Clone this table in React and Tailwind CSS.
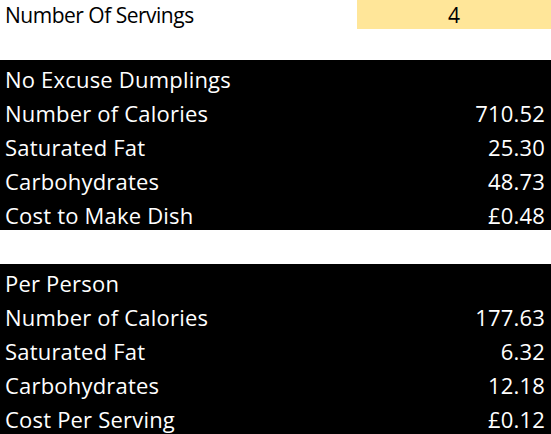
const totals = [
  ["Number of Calories", "710.52"],
  ["Saturated Fat", "25.30"],
  ["Carbohydrates", "48.73"],
  ["Cost to Make Dish", "£0.48"],
];

const perPerson = [
  ["Number of Calories", "177.63"],
  ["Saturated Fat", "6.32"],
  ["Carbohydrates", "12.18"],
  ["Cost Per Serving", "£0.12"],
];

function Row({ label, value }) {
  return (
    <div className="flex h-[34px] items-end justify-between pl-[5px] pr-[6px] pb-[4px]">
      <span>{label}</span>
      {value && <span>{value}</span>}
    </div>
  );
}

function Block({ title, rows }) {
  return (
    <div className="bg-black text-white text-[22px] tracking-[0.2px]">
      <Row label={title} />
      {rows.map(([label, value]) => (
        <Row key={label} label={label} value={value} />
      ))}
    </div>
  );
}

export default function App() {
  return (
    <div className="w-[551px] h-[434px] bg-white text-[21px] leading-none font-['Open_Sans',sans-serif] overflow-hidden">
      <div className="flex h-[29px]">
        <div className="flex-1 flex items-end pl-[5px] pb-[3px] text-black tracking-[-0.5px]">Number Of Servings</div>
        <div className="w-[194px] flex items-end justify-center pb-[3px] bg-[#ffe699] text-black">4</div>
      </div>
      <div className="h-[31px]" />
      <Block title="No Excuse Dumplings" rows={totals} />
      <div className="h-[34px]" />
      <Block title="Per Person" rows={perPerson} />
    </div>
  );
}
